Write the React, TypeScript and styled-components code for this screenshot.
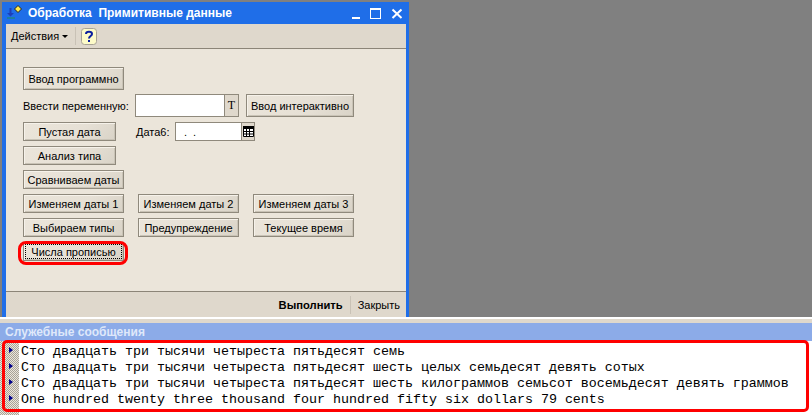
import React from 'react'
import styled, { createGlobalStyle } from 'styled-components'

const GlobalStyle = createGlobalStyle`
  html, body {
    margin: 0;
    padding: 0;
    background: #808080;
  }
`
const Screen = styled.div`
  position: relative;
  width: 812px;
  height: 415px;
  overflow: hidden;
  display: flex;
  flex-direction: column;
  background: #808080;
  font-family: "Liberation Sans", sans-serif;
  font-size: 11px;
  color: #000;
`
const Desktop = styled.div`
  height: 317px;
  padding: 2px 0 0 2px;
  box-sizing: border-box;
  flex-shrink: 0;
`
const Window = styled.div`
  width: 407px;
  height: 315px;
  box-sizing: border-box;
  background: #1f6ee8;
  padding: 0 3px 0 4px;
  display: flex;
  flex-direction: column;
`
const TitleBar = styled.div`
  height: 22px;
  display: flex;
  align-items: center;
  color: #fff;
  font-weight: bold;
  font-size: 12px;
  white-space: pre;
`
const TitleText = styled.span`
  margin-left: 2px;
  flex: 1;
`
const WinButtons = styled.svg`
  width: 56px;
  height: 18px;
`
const Client = styled.div`
  flex: 1;
  display: flex;
  flex-direction: column;
  background: #ebe5da;
`
const Toolbar = styled.div`
  height: 25px;
  flex-shrink: 0;
  display: flex;
  align-items: center;
  box-sizing: border-box;
  padding-left: 5px;
  background: #dfd8cc;
  border-bottom: 1px solid #8c8578;
`
const Menu = styled.span`
  width: 63px;
  display: flex;
  align-items: center;
  gap: 3px;
`
const Caret = styled.span`
  width: 0;
  height: 0;
  border-left: 3px solid transparent;
  border-right: 3px solid transparent;
  border-top: 3px solid #000;
`
const ToolSep = styled.span`
  width: 1px;
  height: 18px;
  background: #c9c2b6;
  margin: 0 5px 0 1px;
`
const Form = styled.div`
  flex: 1;
  display: flex;
  flex-direction: column;
  align-items: flex-start;
  padding: 18px 0 0 17px;
`
const Row = styled.div<{ $top?: number }>`
  display: flex;
  align-items: center;
  margin-top: ${p => p.$top ?? 5}px;
`
const Button = styled.div<{ $w: number; $h?: number; $left?: number; $focus?: boolean }>`
  width: ${p => p.$w}px;
  height: ${p => p.$h ?? 19}px;
  margin-left: ${p => p.$left ?? 0}px;
  box-sizing: border-box;
  display: flex;
  align-items: center;
  justify-content: center;
  white-space: nowrap;
  border: 1px solid #8f897c;
  background: linear-gradient(135deg, #ebe5da 0%, #e6e0d5 60%, #d9d3c7 100%);
  box-shadow: inset 1px 1px 0 #f6f2ea, inset -1px -1px 0 #c9c3b6;
  outline: ${p => (p.$focus ? '1px dotted #000' : 'none')};
  outline-offset: -3px;
`
const Label = styled.span<{ $w: number; $left?: number }>`
  width: ${p => p.$w}px;
  margin-left: ${p => p.$left ?? 0}px;
  white-space: nowrap;
`
const Field = styled.div<{ $w: number; $h: number }>`
  width: ${p => p.$w}px;
  height: ${p => p.$h}px;
  box-sizing: border-box;
  background: #fff;
  border: 1px solid #8f897c;
  border-right: none;
  padding-left: 8px;
  display: flex;
  align-items: center;
  white-space: pre;
  letter-spacing: 1.5px;
`
const FieldButton = styled.div<{ $w: number; $h: number; $serif?: boolean }>`
  width: ${p => p.$w}px;
  height: ${p => p.$h}px;
  box-sizing: border-box;
  background: #dfd8cc;
  border: 1px solid #8f897c;
  display: flex;
  align-items: center;
  justify-content: center;
  font-family: ${p => (p.$serif ? '"Liberation Serif", serif' : 'inherit')};
  font-size: 12px;
`
const ActionBar = styled.div`
  height: 26px;
  flex-shrink: 0;
  box-sizing: border-box;
  display: flex;
  align-items: center;
  justify-content: flex-end;
  padding-right: 6px;
  background: #dfd8cc;
  border-top: 1px solid #8c8578;
`
const ActionMain = styled.span`
  font-weight: bold;
  font-size: 11.2px;
`
const ActionSep = styled.span`
  width: 1px;
  height: 18px;
  background: #c9c2b6;
  margin: 0 7px;
`
const Panel = styled.div`
  flex: 1;
  display: flex;
  flex-direction: column;
  border-top: 2px solid #fff;
  background: #fff;
`
const PanelEdge = styled.div`
  height: 4px;
  background: #dfd8cc;
`
const PanelTitle = styled.div`
  height: 18px;
  padding-left: 5px;
  display: flex;
  align-items: center;
  background: #8cabe8;
  color: #dfe8fa;
  font-weight: bold;
  font-size: 12px;
`
const Messages = styled.div`
  flex: 1;
  display: flex;
  flex-direction: column;
  padding-top: 2px;
  position: relative;
  background: #fff;
`
const Gutter = styled.div`
  position: absolute;
  left: 0;
  top: 0;
  bottom: 0;
  width: 19px;
  background: repeating-conic-gradient(#a8a398 0 25%, #ebe5da 0 50%) 0 0 / 2px 2px;
`
const Message = styled.div`
  position: relative;
  height: 16px;
  display: flex;
  align-items: center;
  font-family: "Liberation Mono", monospace;
  font-size: 13.33px;
  white-space: pre;
  padding-left: 21px;
`
const Marker = styled.span`
  position: absolute;
  left: 9px;
  top: 4px;
  width: 0;
  height: 0;
  border-top: 3.5px solid transparent;
  border-bottom: 3.5px solid transparent;
  border-left: 4px solid #00008b;
`
const Highlight = styled.div<{ $x: number; $y: number; $w: number; $h: number; $r: number; $b: number }>`
  position: absolute;
  left: ${p => p.$x}px;
  top: ${p => p.$y}px;
  width: ${p => p.$w}px;
  height: ${p => p.$h}px;
  box-sizing: border-box;
  border: ${p => p.$b}px solid #f00;
  border-radius: ${p => p.$r}px;
  pointer-events: none;
`

const AppIcon = () => (
  <svg width="20" height="18" viewBox="0 0 20 18">
    <path d="M12 1.5 L15.5 5 L12 8.5 L8.5 5 Z" fill="#ffe94a" stroke="#222" strokeWidth="1" />
    <path d="M1 9 h2.5 v-5 h2 v5 h2.5 l-3.5 3.5 Z" fill="#1d3fb8" />
    <rect x="1" y="13" width="8" height="2" fill="#1d7f9f" />
  </svg>
)

const HelpIcon = () => (
  <svg width="16" height="17" viewBox="0 0 16 17">
    <rect x="0.5" y="0.5" width="15" height="16" rx="3" fill="#fdfbc8" stroke="#a8a396" />
    <path d="M5 6 C5 3 11 3 11 6 C11 8 8 8 8 10.5" fill="none" stroke="#0a1f9f" strokeWidth="2" />
    <rect x="7" y="12" width="2" height="2" fill="#0a1f9f" />
  </svg>
)

const CalendarIcon = () => (
  <svg width="11" height="11" viewBox="0 0 11 11">
    <rect x="0" y="0" width="11" height="3" fill="#000" />
    <path d="M0.5 3v7.5h10V3M3.5 3v7.5M6.5 3v7.5M0.5 5.5h10M0.5 8h10" fill="#fff" stroke="#000" strokeWidth="1" />
  </svg>
)

const messages = [
  'Сто двадцать три тысячи четыреста пятьдесят семь',
  'Сто двадцать три тысячи четыреста пятьдесят шесть целых семьдесят девять сотых',
  'Сто двадцать три тысячи четыреста пятьдесят шесть килограммов семьсот восемьдесят девять граммов',
  'One hundred twenty three thousand four hundred fifty six dollars 79 cents',
]

export default function App() {
  return (
    <Screen>
      <GlobalStyle />
      <Desktop>
        <Window>
          <TitleBar>
            <AppIcon />
            <TitleText>{'Обработка  Примитивные данные'}</TitleText>
            <WinButtons viewBox="0 0 56 18">
              <rect x="2" y="13" width="8" height="2" fill="#fff" />
              <rect x="20.5" y="4.5" width="10" height="10" fill="none" stroke="#fff" strokeWidth="1" />
              <rect x="20" y="4" width="11" height="2" fill="#fff" />
              <path d="M42.5 5.5 L51.5 14 M51.5 5.5 L42.5 14" stroke="#fff" strokeWidth="2" />
            </WinButtons>
          </TitleBar>
          <Client>
            <Toolbar>
              <Menu>
                Действия
                <Caret />
              </Menu>
              <ToolSep />
              <HelpIcon />
            </Toolbar>
            <Form>
              <Button $w={101} $h={23}>Ввод программно</Button>
              <Row $top={4}>
                <Label $w={112}>Ввести переменную:</Label>
                <Field $w={89} $h={23} />
                <FieldButton $w={15} $h={23} $serif>T</FieldButton>
                <Button $w={108} $h={23} $left={7}>Ввод интерактивно</Button>
              </Row>
              <Row>
                <Button $w={93}>Пустая дата</Button>
                <Label $w={39} $left={20}>Дата6:</Label>
                <Field $w={66} $h={19}>{'. .'}</Field>
                <FieldButton $w={14} $h={19}><CalendarIcon /></FieldButton>
              </Row>
              <Row><Button $w={93}>Анализ типа</Button></Row>
              <Row><Button $w={101}>Сравниваем даты</Button></Row>
              <Row>
                <Button $w={101}>Изменяем даты 1</Button>
                <Button $w={101} $left={14}>Изменяем даты 2</Button>
                <Button $w={101} $left={14}>Изменяем даты 3</Button>
              </Row>
              <Row>
                <Button $w={101}>Выбираем типы</Button>
                <Button $w={101} $left={14}>Предупреждение</Button>
                <Button $w={101} $left={14}>Текущее время</Button>
              </Row>
              <Row><Button $w={101} $focus>Числа прописью</Button></Row>
            </Form>
            <ActionBar>
              <ActionMain>Выполнить</ActionMain>
              <ActionSep />
              Закрыть
            </ActionBar>
          </Client>
        </Window>
      </Desktop>
      <Panel>
        <PanelEdge />
        <PanelTitle>Служебные сообщения</PanelTitle>
        <Messages>
          <Gutter />
          {messages.map(m => (
            <Message key={m}>
              <Marker />
              {m}
            </Message>
          ))}
        </Messages>
      </Panel>
      <Highlight $x={18} $y={241} $w={110} $h={24} $r={8} $b={3} />
      <Highlight $x={2} $y={340} $w={807} $h={72} $r={5} $b={3} />
    </Screen>
  )
}
